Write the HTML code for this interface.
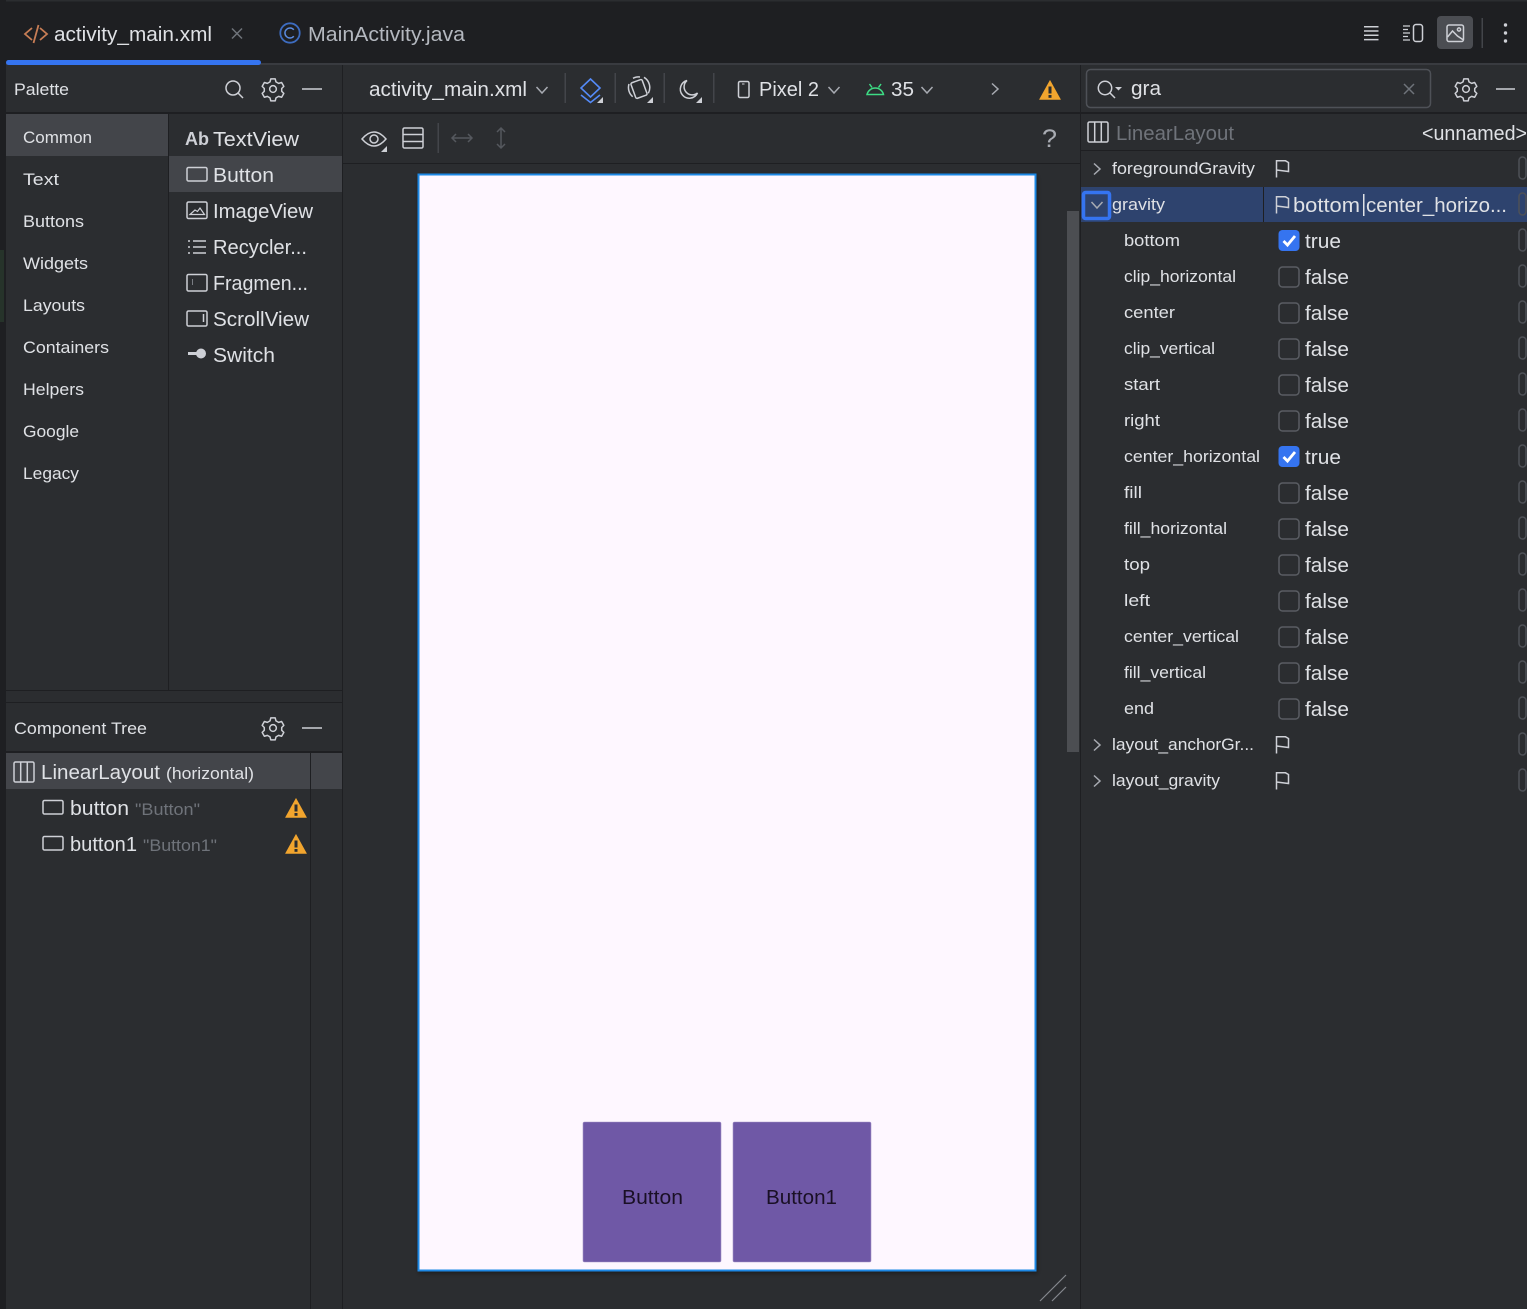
<!DOCTYPE html>
<html><head><meta charset="utf-8"><style>
html,body{margin:0;padding:0;background:#2b2d30;width:1527px;height:1309px;overflow:hidden}
svg{display:block}
text{font-family:"Liberation Sans",sans-serif;fill:#dfe1e5;font-size:17px}
.l{font-size:20px}
.i{fill:none;stroke:#ced0d6;stroke-width:1.5}
.d{fill:#6f737a}
</style></head><body>
<svg width="1527" height="1309" viewBox="0 0 1527 1309" xmlns="http://www.w3.org/2000/svg">
<defs>
<g id="gear"><g transform="scale(.88)" fill="none" stroke="#ced0d6" stroke-width="1.700" stroke-linejoin="round"><circle cx="0" cy="0" r="3.800"/><path d="M-2.500-11.500h5l.9 3.400 3 1.700 3.400-1 2.500 4.400-2.400 2.400v3.200l2.400 2.400-2.500 4.400-3.400-1-3 1.700-.9 3.400h-5l-.9-3.400-3-1.700-3.400 1-2.500-4.400 2.400-2.400v-3.200l-2.400-2.400 2.500-4.400 3.400 1 3-1.700z"/></g></g>
<g id="warn"><path d="M0-9.500 10.500 9.500h-21z" fill="#f2a52e" stroke="#f2a52e" stroke-linejoin="round" stroke-width=".6"/><rect x="-1.500" y="-3.500" width="3" height="7" fill="#2b2d30"/><rect x="-1.500" y="5" width="3" height="2.800" fill="#2b2d30"/></g>
<path id="chevR" d="M-3-5.500 3 0l-6 5.500" fill="none" stroke="#a8abb2" stroke-width="1.500"/>
<path id="chevD" d="M-5.500-3 0 3l5.500-6" fill="none" stroke="#a8abb2" stroke-width="1.500"/>
<path id="flag" d="M-6.500 9.500V-7.200H2.500L5.500-5.500V3.500L-6.500 2" fill="none" stroke="#ced0d6" stroke-width="1.500"/>
<rect id="cb" x="0" y="0" width="20" height="20" rx="3.500" fill="#2b2d30" stroke="#5a5d63" stroke-width="1.500"/>
<g id="cbOn"><rect x="0" y="0" width="21" height="21" rx="4" fill="#3574f0"/><path d="M5 11l4 4 7.500-9" fill="none" stroke="#fff" stroke-width="2.800"/></g>
<rect id="stub" x="0" y="-11" width="7" height="22" rx="3.500" fill="none" stroke="#4e5157" stroke-width="1.500"/>
<g id="ll" class="i"><rect x="0" y="0" width="20" height="20" rx="1.500"/><path d="M6.700 0v20M13.300 0v20"/></g>
<rect id="btnI" x="0" y="0" width="20" height="13.500" rx="1.500" class="i"/>
<path id="tri" d="M6 0v6H0z" fill="#ced0d6"/>
<filter id="sh" x="-5%" y="-5%" width="110%" height="110%"><feDropShadow dx="1" dy="2" stdDeviation="2" flood-color="#000" flood-opacity=".35"/></filter>
</defs>

<rect width="1527" height="1309" fill="#2b2d30"/>
<rect width="1527" height="64" fill="#1e1f22"/>
<rect width="1527" height="1.500" fill="#2b2d30"/>
<rect x="0" width="6" height="1309" fill="#1e1f22"/>
<rect x="0" y="250" width="4" height="72" fill="#26332a"/>
<rect y="63" x="6" width="1521" height="2" fill="#393b40"/>
<rect x="6" y="60" width="255" height="5" rx="2.500" fill="#3574f0"/>

<!-- tabs -->
<g fill="none" stroke="#c77d55" stroke-width="1.800"><path d="M32 28l-7 6 7 6M40 28l7 6-7 6M38.500 25l-5 18"/></g>
<text class="l" x="54" y="41" textLength="158" lengthAdjust="spacingAndGlyphs">activity_main.xml</text>
<path d="M232 28.500l10 10m0-10l-10 10" stroke="#6f737a" stroke-width="1.500"/>
<circle cx="290" cy="33" r="9.700" fill="none" stroke="#3d6cc0" stroke-width="1.800"/>
<path d="M293.800 29.800a5 5 0 1 0 0 6.400" fill="none" stroke="#5b8be0" stroke-width="1.500"/>
<text class="l" x="308" y="41" textLength="157" lengthAdjust="spacingAndGlyphs" style="fill:#b4b8bf">MainActivity.java</text>

<!-- top right -->
<path d="M1364 26.700h14.500M1364 31h14.500M1364 35.300h14.500M1364 39.600h14.500" stroke="#ced0d6" stroke-width="1.500"/>
<path d="M1403 26h7M1403 33h7M1403 40h7M1403 29.500h5M1403 36.500h5" stroke="#ced0d6" stroke-width="1.300"/>
<rect x="1413.500" y="24.500" width="9" height="17" rx="2.500" class="i"/>
<rect x="1437" y="16" width="36" height="33" rx="4" fill="#4b4d52"/>
<rect x="1447" y="25" width="16.500" height="16.500" rx="2" class="i"/>
<circle cx="1459" cy="29.500" r="1.600" class="i"/><path d="M1447.500 37l5-6 5 5 6 4" class="i"/>
<rect x="1481.500" y="18" width="1.500" height="30" fill="#43454a"/>
<g fill="#ced0d6"><circle cx="1505.500" cy="25" r="1.700"/><circle cx="1505.500" cy="33" r="1.700"/><circle cx="1505.500" cy="41" r="1.700"/></g>

<!-- structure lines -->
<g fill="#1e1f22">
<rect x="6" y="112" width="1521" height="2"/>
<rect x="168" y="114" width="1" height="576"/>
<rect x="342" y="65" width="1" height="1244"/>
<rect x="343" y="163" width="737" height="1"/>
<rect x="1080" y="65" width="1" height="1244"/>
<rect x="1081" y="150" width="446" height="1"/>
<rect x="6" y="690" width="336" height="1"/>
<rect x="6" y="702" width="336" height="1"/>
<rect x="6" y="751" width="336" height="2"/>
</g>

<!-- palette -->
<text x="14" y="95" textLength="55" lengthAdjust="spacingAndGlyphs">Palette</text>
<circle cx="233" cy="88" r="7" class="i"/><path d="M238 93l5 5" class="i"/>
<use href="#gear" x="273" y="89"/>
<path d="M302 89h20" stroke="#ced0d6" stroke-width="1.500"/>
<rect x="6" y="114" width="162" height="42" fill="#43454a"/>
<rect x="169" y="156" width="173" height="36" fill="#43454a"/>
<g style="fill:#d1d3d9">
<text x="23" y="143" textLength="69" lengthAdjust="spacingAndGlyphs">Common</text>
<text x="23" y="185" textLength="36" lengthAdjust="spacingAndGlyphs">Text</text>
<text x="23" y="227" textLength="61" lengthAdjust="spacingAndGlyphs">Buttons</text>
<text x="23" y="269" textLength="65" lengthAdjust="spacingAndGlyphs">Widgets</text>
<text x="23" y="311" textLength="62" lengthAdjust="spacingAndGlyphs">Layouts</text>
<text x="23" y="353" textLength="86" lengthAdjust="spacingAndGlyphs">Containers</text>
<text x="23" y="395" textLength="61" lengthAdjust="spacingAndGlyphs">Helpers</text>
<text x="23" y="437" textLength="56" lengthAdjust="spacingAndGlyphs">Google</text>
<text x="23" y="479" textLength="56" lengthAdjust="spacingAndGlyphs">Legacy</text>
</g>
<text x="185" y="145" textLength="24" lengthAdjust="spacingAndGlyphs" style="font-weight:bold;font-size:18px;fill:#ced0d6">Ab</text>
<text class="l" x="213" y="146" textLength="86" lengthAdjust="spacingAndGlyphs">TextView</text>
<use href="#btnI" x="187" y="167.500"/>
<text class="l" x="213" y="182" textLength="61" lengthAdjust="spacingAndGlyphs">Button</text>
<rect x="187" y="202" width="20" height="16.500" rx="1.500" class="i"/><path d="M190 214.500l5-4.500 2.500 1.500 2.500-3.500 4.500 6.500z" fill="none" stroke="#ced0d6" stroke-width="1.200"/>
<text class="l" x="213" y="218" textLength="100" lengthAdjust="spacingAndGlyphs">ImageView</text>
<path d="M188 241h2M188 247h2M188 253h2M193 241h13M193 247h13M193 253h13" stroke="#ced0d6" stroke-width="1.400"/>
<text class="l" x="213" y="254" textLength="94" lengthAdjust="spacingAndGlyphs">Recycler...</text>
<rect x="187" y="274.500" width="20" height="16.500" rx="1.500" class="i"/><path d="M192.500 279v6" stroke="#7a7d83" stroke-width="1"/>
<text class="l" x="213" y="290" textLength="95" lengthAdjust="spacingAndGlyphs">Fragmen...</text>
<rect x="187" y="311" width="20" height="15" rx="1.500" class="i"/><path d="M203.500 314v8" stroke="#ced0d6" stroke-width="1.500"/>
<text class="l" x="213" y="326" textLength="96" lengthAdjust="spacingAndGlyphs">ScrollView</text>
<path d="M188 353.500h10" stroke="#ced0d6" stroke-width="3"/><circle cx="201" cy="353.500" r="5" fill="#ced0d6"/>
<text class="l" x="213" y="362" textLength="62" lengthAdjust="spacingAndGlyphs">Switch</text>

<!-- component tree -->
<text x="14" y="734" textLength="133" lengthAdjust="spacingAndGlyphs">Component Tree</text>
<use href="#gear" x="273" y="728"/>
<path d="M302 728h20" stroke="#ced0d6" stroke-width="1.500"/>
<rect x="6" y="753" width="336" height="36" fill="#43454a"/>
<rect x="310" y="753" width="1" height="556" fill="#1e1f22"/>
<use href="#ll" x="14" y="762"/>
<text class="l" x="41" y="779" textLength="119" lengthAdjust="spacingAndGlyphs">LinearLayout</text>
<text x="166" y="779" textLength="88" lengthAdjust="spacingAndGlyphs">(horizontal)</text>
<use href="#btnI" x="43" y="800.500"/>
<text class="l" x="70" y="815" textLength="59" lengthAdjust="spacingAndGlyphs">button</text>
<text class="d" x="135" y="815" textLength="65" lengthAdjust="spacingAndGlyphs">"Button"</text>
<use href="#warn" x="296" y="808"/>
<use href="#btnI" x="43" y="836.500"/>
<text class="l" x="70" y="851" textLength="67" lengthAdjust="spacingAndGlyphs">button1</text>
<text class="d" x="143" y="851" textLength="74" lengthAdjust="spacingAndGlyphs">"Button1"</text>
<use href="#warn" x="296" y="844"/>

<!-- design toolbar -->
<text class="l" x="369" y="96" textLength="158" lengthAdjust="spacingAndGlyphs">activity_main.xml</text>
<use href="#chevD" x="542" y="90"/>
<g fill="#43454a"><rect x="564.500" y="73" width="1.500" height="30"/><rect x="614.500" y="73" width="1.500" height="30"/><rect x="663.500" y="73" width="1.500" height="30"/><rect x="713" y="73" width="1.500" height="30"/></g>
<path d="M590.500 79l9.500 9-9.500 9-9.500-9z" fill="none" stroke="#548af7" stroke-width="1.600"/>
<path d="M581 95l9.500 7.500 9.500-7.500" fill="none" stroke="#548af7" stroke-width="1.600"/>
<use href="#tri" x="597" y="97"/>
<g class="i"><rect x="633" y="80.700" width="12" height="16.500" rx="1.500" transform="rotate(-20 639 89)"/><path d="M629 84a12 12 0 0 0 3.700 12.700M644 77.300a12 12 0 0 1 4.300 16M633 78.300a12 12 0 0 1 7-1.300"/></g>
<use href="#tri" x="647" y="97"/>
<path d="M687 80.500a9 9 0 1 0 10.500 12.500a8 8 0 0 1-10.500-12.500z" class="i"/>
<use href="#tri" x="696" y="97"/>
<rect x="738.500" y="81.500" width="10.500" height="16" rx="1.500" class="i"/><path d="M742 84h2.500" stroke="#ced0d6"/>
<text class="l" x="759" y="96" textLength="60" lengthAdjust="spacingAndGlyphs">Pixel 2</text>
<use href="#chevD" x="834" y="90"/>
<path d="M867 94.500a8.500 8.500 0 0 1 16.500 0zM869.500 84l2.500 3.500M881 84l-2.500 3.500" fill="none" stroke="#3ddc84" stroke-width="1.500"/>
<text class="l" x="891" y="96" textLength="23" lengthAdjust="spacingAndGlyphs">35</text>
<use href="#chevD" x="927" y="90"/>
<use href="#chevR" x="995" y="89"/>
<use href="#warn" x="1050" y="90"/>

<!-- canvas toolbar -->
<path d="M362 139q12-14 24 0q-12 14-24 0z" class="i"/><circle cx="374" cy="139" r="4" class="i"/>
<use href="#tri" x="381" y="146"/>
<rect x="403" y="128" width="20" height="20" rx="1.500" class="i"/><path d="M403 134.500h20M403 141.500h20" class="i"/>
<rect x="437.500" y="123" width="1.500" height="30" fill="#43454a"/>
<path d="M452 138h20M456 134l-4 4 4 4M468 134l4 4-4 4" fill="none" stroke="#55585e" stroke-width="1.500"/>
<path d="M501 128v20M497 132l4-4 4 4M497 144l4 4 4-4" fill="none" stroke="#55585e" stroke-width="1.500"/>
<text x="1042" y="147" textLength="15" lengthAdjust="spacingAndGlyphs" style="font-size:25px;fill:#a8abb2">?</text>

<!-- canvas -->
<rect x="418.500" y="174.500" width="617" height="1096" fill="#fef7ff" stroke="#1e88e5" stroke-width="2" filter="url(#sh)"/>
<rect x="583" y="1122" width="138" height="140" rx="1.500" fill="#6f58a6" stroke="#a493c8" stroke-width=".6"/>
<rect x="733" y="1122" width="138" height="140" rx="1.500" fill="#6f58a6" stroke="#a493c8" stroke-width=".6"/>
<text class="l" x="622" y="1204" textLength="61" lengthAdjust="spacingAndGlyphs" style="fill:#1a1025">Button</text>
<text class="l" x="766" y="1204" textLength="71" lengthAdjust="spacingAndGlyphs" style="fill:#1a1025">Button1</text>
<rect x="1067" y="211" width="12" height="541" fill="#4c4e52"/>
<path d="M1040 1301l26-26M1052 1301l14-14" stroke="#85888e" stroke-width="1.200"/>

<!-- right search -->
<rect x="1086.500" y="69.500" width="344" height="38" rx="4" fill="#2b2d30" stroke="#4e5157" stroke-width="1.500"/>
<circle cx="1105" cy="88" r="6.700" class="i"/><path d="M1110 93l5 5" class="i"/><path d="M1115 87h7l-3.500 3.500z" fill="#ced0d6"/>
<text class="l" x="1131" y="95" textLength="30" lengthAdjust="spacingAndGlyphs">gra</text>
<path d="M1404 84l10 10m0-10l-10 10" stroke="#6f737a" stroke-width="1.500"/>
<use href="#gear" x="1466" y="89"/>
<path d="M1496 89h19" stroke="#ced0d6" stroke-width="1.500"/>

<use href="#ll" x="1088" y="122"/>
<text class="l d" x="1116" y="140" textLength="118" lengthAdjust="spacingAndGlyphs">LinearLayout</text>
<text class="l" x="1422" y="140" textLength="105" lengthAdjust="spacingAndGlyphs">&lt;unnamed&gt;</text>

<!-- attributes -->
<rect x="1081" y="187" width="446" height="35" fill="#2e436e"/>
<rect x="1263" y="187" width="1" height="35" fill="#1e1f22"/>
<rect x="1083.500" y="192.500" width="26" height="26" rx="2" fill="#2e436e" stroke="#3574f0" stroke-width="3.500"/>
<use href="#chevD" x="1097" y="205"/>
<use href="#chevR" x="1097" y="169"/>
<use href="#chevR" x="1097" y="745"/>
<use href="#chevR" x="1097" y="781"/>

<text x="1112" y="174" textLength="143" lengthAdjust="spacingAndGlyphs">foregroundGravity</text>
<text x="1112" y="210" textLength="53" lengthAdjust="spacingAndGlyphs">gravity</text>
<text x="1112" y="750" textLength="142" lengthAdjust="spacingAndGlyphs">layout_anchorGr...</text>
<text x="1112" y="786" textLength="108" lengthAdjust="spacingAndGlyphs">layout_gravity</text>
<use href="#flag" x="1283" y="168"/><use href="#flag" x="1283" y="204"/><use href="#flag" x="1283" y="744"/><use href="#flag" x="1283" y="780"/>
<text class="l" x="1293" y="212" textLength="67" lengthAdjust="spacingAndGlyphs">bottom</text>
<rect x="1363" y="194" width="1.500" height="22" fill="#dfe1e5"/>
<text class="l" x="1366" y="212" textLength="141" lengthAdjust="spacingAndGlyphs">center_horizo...</text>

<text x="1124" y="246" textLength="56" lengthAdjust="spacingAndGlyphs">bottom</text>
<text x="1124" y="282" textLength="112" lengthAdjust="spacingAndGlyphs">clip_horizontal</text>
<text x="1124" y="318" textLength="51" lengthAdjust="spacingAndGlyphs">center</text>
<text x="1124" y="354" textLength="91" lengthAdjust="spacingAndGlyphs">clip_vertical</text>
<text x="1124" y="390" textLength="36" lengthAdjust="spacingAndGlyphs">start</text>
<text x="1124" y="426" textLength="36" lengthAdjust="spacingAndGlyphs">right</text>
<text x="1124" y="462" textLength="136" lengthAdjust="spacingAndGlyphs">center_horizontal</text>
<text x="1124" y="498" textLength="18" lengthAdjust="spacingAndGlyphs">fill</text>
<text x="1124" y="534" textLength="103" lengthAdjust="spacingAndGlyphs">fill_horizontal</text>
<text x="1124" y="570" textLength="26" lengthAdjust="spacingAndGlyphs">top</text>
<text x="1124" y="606" textLength="26" lengthAdjust="spacingAndGlyphs">left</text>
<text x="1124" y="642" textLength="115" lengthAdjust="spacingAndGlyphs">center_vertical</text>
<text x="1124" y="678" textLength="82" lengthAdjust="spacingAndGlyphs">fill_vertical</text>
<text x="1124" y="714" textLength="30" lengthAdjust="spacingAndGlyphs">end</text>

<use href="#cbOn" x="1278.500" y="230"/>
<text class="l" x="1305" y="248" textLength="36" lengthAdjust="spacingAndGlyphs">true</text>
<use href="#cb" x="1279" y="267"/><text class="l" x="1305" y="284" textLength="44" lengthAdjust="spacingAndGlyphs">false</text>
<use href="#cb" x="1279" y="303"/><text class="l" x="1305" y="320" textLength="44" lengthAdjust="spacingAndGlyphs">false</text>
<use href="#cb" x="1279" y="339"/><text class="l" x="1305" y="356" textLength="44" lengthAdjust="spacingAndGlyphs">false</text>
<use href="#cb" x="1279" y="375"/><text class="l" x="1305" y="392" textLength="44" lengthAdjust="spacingAndGlyphs">false</text>
<use href="#cb" x="1279" y="411"/><text class="l" x="1305" y="428" textLength="44" lengthAdjust="spacingAndGlyphs">false</text>
<use href="#cbOn" x="1278.500" y="446"/>
<text class="l" x="1305" y="464" textLength="36" lengthAdjust="spacingAndGlyphs">true</text>
<use href="#cb" x="1279" y="483"/><text class="l" x="1305" y="500" textLength="44" lengthAdjust="spacingAndGlyphs">false</text>
<use href="#cb" x="1279" y="519"/><text class="l" x="1305" y="536" textLength="44" lengthAdjust="spacingAndGlyphs">false</text>
<use href="#cb" x="1279" y="555"/><text class="l" x="1305" y="572" textLength="44" lengthAdjust="spacingAndGlyphs">false</text>
<use href="#cb" x="1279" y="591"/><text class="l" x="1305" y="608" textLength="44" lengthAdjust="spacingAndGlyphs">false</text>
<use href="#cb" x="1279" y="627"/><text class="l" x="1305" y="644" textLength="44" lengthAdjust="spacingAndGlyphs">false</text>
<use href="#cb" x="1279" y="663"/><text class="l" x="1305" y="680" textLength="44" lengthAdjust="spacingAndGlyphs">false</text>
<use href="#cb" x="1279" y="699"/><text class="l" x="1305" y="716" textLength="44" lengthAdjust="spacingAndGlyphs">false</text>

<use href="#stub" x="1519" y="168"/><use href="#stub" x="1519" y="204"/><use href="#stub" x="1519" y="240"/><use href="#stub" x="1519" y="276"/><use href="#stub" x="1519" y="312"/><use href="#stub" x="1519" y="348"/><use href="#stub" x="1519" y="384"/><use href="#stub" x="1519" y="420"/><use href="#stub" x="1519" y="456"/><use href="#stub" x="1519" y="492"/><use href="#stub" x="1519" y="528"/><use href="#stub" x="1519" y="564"/><use href="#stub" x="1519" y="600"/><use href="#stub" x="1519" y="636"/><use href="#stub" x="1519" y="672"/><use href="#stub" x="1519" y="708"/><use href="#stub" x="1519" y="744"/><use href="#stub" x="1519" y="780"/>
</svg>
</body></html>
